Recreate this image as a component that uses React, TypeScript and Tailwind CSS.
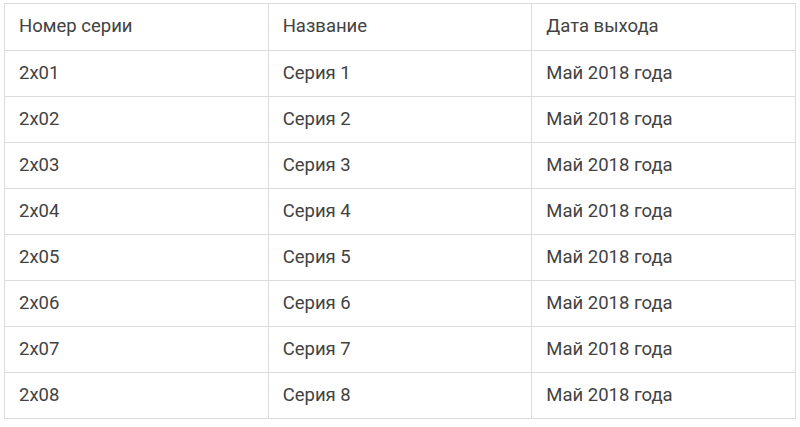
const rows = Array.from({ length: 8 }, (_, i) => ({
  num: `2x0${i + 1}`,
  title: `Серия ${i + 1}`,
  date: 'Май 2018 года',
}));

export default function App() {
  return (
    <div className="w-[800px] h-[427px] bg-white pt-[3px] pl-[4px] font-['Roboto',sans-serif] text-[18.5px] text-[#424242]">
      <table className="w-[792px] border-collapse table-fixed">
        <tbody>
          <tr className="h-[47px]">
            <td className="border border-[#dcdcdc] pl-[14px]">Номер серии</td>
            <td className="border border-[#dcdcdc] pl-[14px]">Название</td>
            <td className="border border-[#dcdcdc] pl-[14px]">Дата выхода</td>
          </tr>
          {rows.map((r) => (
            <tr key={r.num} className="h-[46px]">
              <td className="border border-[#dcdcdc] pl-[14px]">{r.num}</td>
              <td className="border border-[#dcdcdc] pl-[14px]">{r.title}</td>
              <td className="border border-[#dcdcdc] pl-[14px]">{r.date}</td>
            </tr>
          ))}
        </tbody>
      </table>
    </div>
  );
}
